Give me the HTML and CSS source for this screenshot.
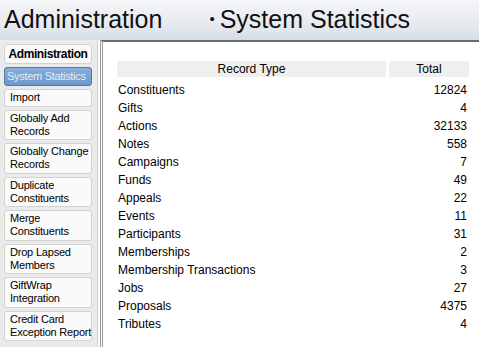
FILE: index.html
```html
<!DOCTYPE html>
<html>
<head>
  <title>System Statistics</title>
  <meta name="viewport" content="width=device-width, initial-scale=1.0">
  <link rel="stylesheet" href="styles.css">
</head>
<body>
  <div class="header">
    <span class="crumb">Administration</span>
    <span class="crumb current">System Statistics</span>
  </div>
  <div class="main">
    <nav class="sidebar">
      <div class="nav-title">Administration</div>
      <a class="nav-item selected" href="#">System Statistics</a>
      <a class="nav-item" href="#">Import</a>
      <a class="nav-item" href="#">Globally Add<br>Records</a>
      <a class="nav-item" href="#">Globally Change<br>Records</a>
      <a class="nav-item" href="#">Duplicate<br>Constituents</a>
      <a class="nav-item" href="#">Merge<br>Constituents</a>
      <a class="nav-item" href="#">Drop Lapsed<br>Members</a>
      <a class="nav-item" href="#">GiftWrap<br>Integration</a>
      <a class="nav-item" href="#">Credit Card<br>Exception Report</a>
    </nav>
    <section class="content">
      <table class="stats">
        <thead>
          <tr><th class="type">Record Type</th><th class="total">Total</th></tr>
        </thead>
        <tbody>
          <tr><td>Constituents</td><td class="num">12824</td></tr>
          <tr><td>Gifts</td><td class="num">4</td></tr>
          <tr><td>Actions</td><td class="num">32133</td></tr>
          <tr><td>Notes</td><td class="num">558</td></tr>
          <tr><td>Campaigns</td><td class="num">7</td></tr>
          <tr><td>Funds</td><td class="num">49</td></tr>
          <tr><td>Appeals</td><td class="num">22</td></tr>
          <tr><td>Events</td><td class="num">11</td></tr>
          <tr><td>Participants</td><td class="num">31</td></tr>
          <tr><td>Memberships</td><td class="num">2</td></tr>
          <tr><td>Membership Transactions</td><td class="num">3</td></tr>
          <tr><td>Jobs</td><td class="num">27</td></tr>
          <tr><td>Proposals</td><td class="num">4375</td></tr>
          <tr><td>Tributes</td><td class="num">4</td></tr>
        </tbody>
      </table>
    </section>
  </div>
</body>
</html>
```

FILE: styles.css
```css
html, body {
  height: 100%;
  margin: 0;
  padding: 0;
  font-family: "Liberation Sans", Arial, sans-serif;
  background: #fff;
  color: #000;
  overflow: hidden;
}
.header {
  height: 40px;
  display: flex;
  align-items: center;
  gap: 47px;
  padding: 0 0 1px 4px;
  background: linear-gradient(#f4f6f8, #e4e8ee 70%, #d6dce4);
  font-size: 25px;
  color: #111;
  box-sizing: border-box;
}
.crumb.current::before {
  content: "\2022";
  font-size: 15px;
  margin-right: 5px;
  vertical-align: 4px;
}
.main {
  display: flex;
  height: 307px;
}
.sidebar {
  width: 93px;
  padding: 4px 0 0 4px;
  background: #eaeaea;
  border-right: 1px solid #d0d0d0;
  display: flex;
  flex-direction: column;
  gap: 3px;
  font-size: 11px;
  letter-spacing: -0.2px;
}
.nav-title,
.nav-item {
  display: block;
  margin-right: 5px;
  background: #fafafa;
  border: 1px solid #d2d2d2;
  border-radius: 3px;
  padding: 1px 2px 1.5px 5px;
  line-height: 13px;
  color: #000;
  text-decoration: none;
  white-space: nowrap;
}
.nav-title {
  font-weight: bold;
  font-size: 12px;
  line-height: 16px;
  letter-spacing: -0.4px;
  text-align: center;
  padding: 1px 0;
}
.nav-item.selected {
  background: linear-gradient(#86addb, #6e98cc);
  border-color: #4f78ab;
  color: #e4eefa;
  padding: 2px 0 2px 2px;
  letter-spacing: -0.3px;
}
.content {
  flex: 1;
  border-left: 3px double #9a9a9a;
  border-top: 2px solid #6a6a6a;
  margin-left: 2px;
  padding: 19px 0 0 14px;
}
.stats {
  border-collapse: separate;
  border-spacing: 0;
  font-size: 12px;
}
.stats th {
  font-weight: normal;
  background: #efefef;
  height: 16px;
  padding: 0;
  border-bottom: 3px solid #fff;
}
.stats th.type {
  width: 269px;
  border-right: 3px solid #fff;
}
.stats th.total {
  width: 80px;
}
.stats td {
  height: 17px;
  padding: 1px 0 0 1px;
  white-space: nowrap;
}
.stats td.num {
  text-align: right;
  padding: 1px 2px 0 0;
}
```
